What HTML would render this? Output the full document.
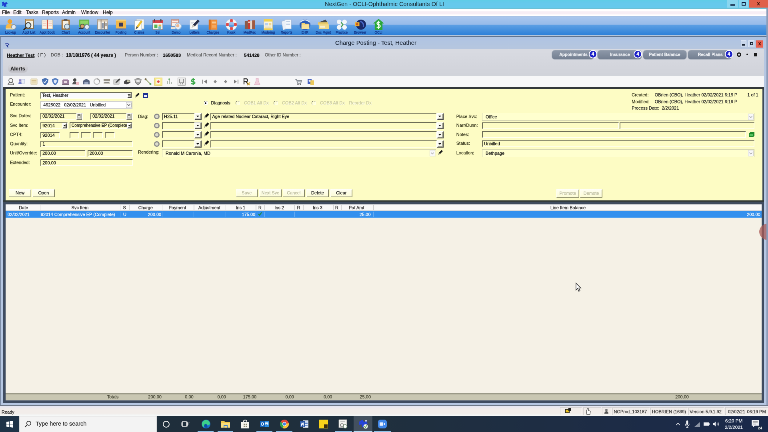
<!DOCTYPE html>
<html><head><meta charset="utf-8"><title>NextGen - Charge Posting</title>
<style>
html,body{margin:0;padding:0;width:768px;height:432px;overflow:hidden;background:#b6c7e2}
#stage{position:absolute;left:0;top:0;width:1920px;height:1080px;transform:scale(.4);transform-origin:0 0;will-change:transform;font-family:"Liberation Sans",sans-serif;overflow:hidden}
#stage div,#stage span.t,#stage svg{position:absolute;display:block}
#stage span.t{white-space:nowrap;-webkit-text-stroke:0.28px}
</style></head><body><div id="stage">
<div style="left:0px;top:0px;width:1920px;height:22px;background:linear-gradient(#60cde8,#66c9ec 8px,#66c9ec)"></div><div style="left:0px;top:19.5px;width:1920px;height:3px;background:#6bc0d6"></div><span class="t" style="top:2.3px;font-size:14.5px;line-height:17.4px;left:661px;width:600px;text-align:center;color:#1a2a33;-webkit-text-stroke:0">NextGen - OCLI-Ophthalmic Consultants Of LI</span><div style="left:1818px;top:0px;width:27px;height:19px;background:#8ad6ef"></div><div style="left:1847px;top:0px;width:24px;height:19px;background:#8ad6ef"></div><div style="left:1872px;top:0px;width:48px;height:19px;background:#e0604a"></div><div style="left:1826px;top:11px;width:11px;height:3px;background:#0a1a3a"></div><div style="left:1854px;top:5px;width:10px;height:9px;border:2px solid #0a1a3a;box-sizing:border-box"></div><span class="t" style="top:1.2px;font-size:13px;line-height:15.6px;left:1596px;width:600px;text-align:center;color:#30100a;font-weight:bold">x</span><svg style="left:2px;top:2px" width="19" height="18" viewBox="0 0 22 20"><path d="M3 4 L9 2 L11 6 L16 3 L20 8 L15 11 L17 16 L10 17 L8 13 L3 15 L5 9 Z" fill="#1f3fd0"/></svg><div style="left:0px;top:21.5px;width:1920px;height:19px;background:linear-gradient(#fff 0,#fff 5px,#f7eef5 7px,#f7eef5 13px,#fff 15px)"></div><span class="t" style="top:23.8px;font-size:12px;line-height:14.4px;left:5px;color:#222">File</span><span class="t" style="top:23.8px;font-size:12px;line-height:14.4px;left:33px;color:#222">Edit</span><span class="t" style="top:23.8px;font-size:12px;line-height:14.4px;left:65px;color:#222">Tasks</span><span class="t" style="top:23.8px;font-size:12px;line-height:14.4px;left:105px;color:#222">Reports</span><span class="t" style="top:23.8px;font-size:12px;line-height:14.4px;left:155px;color:#222">Admin</span><span class="t" style="top:23.8px;font-size:12px;line-height:14.4px;left:203px;color:#222">Window</span><span class="t" style="top:23.8px;font-size:12px;line-height:14.4px;left:257px;color:#222">Help</span><div style="left:0px;top:39.5px;width:1920px;height:2px;background:#a3b7d1"></div><div style="left:0px;top:41px;width:1920px;height:46px;background:linear-gradient(#abc8ee 0%,#98bbea 44%,#5d9fe4 47%,#2f82d9 100%)"></div><div style="left:0px;top:86.5px;width:1920px;height:2px;background:#cfe0f5"></div><div style="left:0px;top:88.5px;width:1920px;height:4.5px;background:#61748f"></div><svg style="left:10.75px;top:45.5px" width="31" height="31" viewBox="0 0 32 32"><circle cx="14" cy="8" r="6" fill="#f3a32c"/><path d="M3 27Q3 14 14 14Q25 14 25 27Z" fill="#f6b84a"/><circle cx="24" cy="22" r="6" fill="#dfeaf5" stroke="#8a94a0" stroke-width="2"/><path d="M4 27H22" stroke="#e8d9a8" stroke-width="3"/></svg><svg style="left:56.75px;top:45.5px" width="31" height="31" viewBox="0 0 32 32"><path d="M7 2H27V26H7Z" fill="#f6f2e6" stroke="#8c6a3a" stroke-width="2"/><path d="M7 2H27V7H7Z" fill="#c9a46a"/><circle cx="14" cy="18" r="7" fill="#cfe4ee" stroke="#3a3a3a" stroke-width="2.2"/><path d="M8 24L2 30" stroke="#222" stroke-width="3"/></svg><svg style="left:102.75px;top:45.5px" width="31" height="31" viewBox="0 0 32 32"><path d="M2 4H15V27H2Z" fill="#fbf6ea" stroke="#b9a98a" stroke-width="1.5"/><path d="M17 4H30V27H17Z" fill="#fbf6ea" stroke="#b9a98a" stroke-width="1.5"/><path d="M15 3H17V28H15Z" fill="#d84a3a"/><path d="M4 9H13M4 14H13M4 19H13M19 9H28M19 14H28M19 19H28" stroke="#e6a090" stroke-width="1.5"/></svg><svg style="left:148.75px;top:45.5px" width="31" height="31" viewBox="0 0 32 32"><path d="M5 3H26V29H5Z" fill="#a8702c"/><path d="M8 7H23V26H8Z" fill="#f4f0e4"/><path d="M11 1H20V6H11Z" fill="#5a5a5a"/><circle cx="19" cy="21" r="6.5" fill="#cfe4f0" stroke="#6a7a8a" stroke-width="2"/></svg><svg style="left:194.75px;top:45.5px" width="31" height="31" viewBox="0 0 32 32"><path d="M3 3H29V22H3Z" fill="#6ab84a"/><path d="M6 6H26V14H6Z" fill="#8fd468"/><circle cx="11" cy="20" r="5" fill="#d9a06a" stroke="#444" stroke-width="1.5"/><circle cx="23" cy="22" r="6" fill="#dfeaf5" stroke="#7a8a9a" stroke-width="2"/><path d="M2 26H14" stroke="#333" stroke-width="3"/></svg><svg style="left:240.75px;top:45.5px" width="31" height="31" viewBox="0 0 32 32"><path d="M3 3H29V28H3Z" fill="#f4f0e8" stroke="#9a8a78" stroke-width="1.5"/><path d="M3 3H29V8H3Z" fill="#d8c8b0"/><path d="M12 3V28M21 8V28" stroke="#8a7a6a" stroke-width="2"/><path d="M14 12H19V26H14Z" fill="#8a96a8"/><path d="M22 12H28V20H22Z" fill="#a8a8a8"/></svg><svg style="left:286.75px;top:45.5px" width="31" height="31" viewBox="0 0 32 32"><path d="M3 3H29V29H3Z" fill="#f2b84a"/><path d="M3 3H29V7H3Z" fill="#f7d070"/><path d="M11 11H21V21H11Z" fill="#3a3a5a"/><path d="M3 26H29V29H3Z" fill="#5a7ab8"/></svg><svg style="left:332.75px;top:45.5px" width="31" height="31" viewBox="0 0 32 32"><path d="M8 2H28V27H8Z" fill="#f8f8f4" stroke="#a8b0b8" stroke-width="1.2"/><path d="M4 6H22V30H4Z" fill="#fdfdfa" stroke="#a8b0b8" stroke-width="1.2"/><path d="M6 28L9 20L20 5L24 8L13 24Z" fill="#f0c030"/><path d="M6 28L9 20L13 24Z" fill="#555"/></svg><svg style="left:378.75px;top:45.5px" width="31" height="31" viewBox="0 0 32 32"><path d="M3 5H29V29H3Z" fill="#f6f6f2" stroke="#7a7a8a" stroke-width="1.5"/><path d="M3 5H29V12H3Z" fill="#d8434a"/><path d="M8 2V8M24 2V8" stroke="#444" stroke-width="2.5"/><path d="M7 16H15V25H7Z" fill="#58b85a"/><path d="M18 16H25V21H18Z" fill="#e8b040"/><circle cx="21" cy="24" r="4" fill="#7ac0c8"/></svg><svg style="left:424.75px;top:45.5px" width="31" height="31" viewBox="0 0 32 32"><path d="M4 3H22V20H4Z" fill="#f8f4ee" stroke="#c08a7a" stroke-width="1.5"/><path d="M6 6H20M6 10H20" stroke="#e09a8a" stroke-width="2"/><circle cx="21" cy="20" r="8" fill="#e8f0f8" stroke="#a8c0d8" stroke-width="2"/><circle cx="20" cy="19" r="4" fill="#f0b890"/><path d="M2 22H14V28H2Z" fill="#e8e0d8"/></svg><svg style="left:470.75px;top:45.5px" width="31" height="31" viewBox="0 0 32 32"><path d="M4 4H24V28H4Z" fill="#fbfbf8" stroke="#c8ccd4" stroke-width="1.2"/><path d="M8 24L12 16L24 3L29 7L17 20Z" fill="#2a3048"/><path d="M8 24L12 16L17 20Z" fill="#d8d0c0"/><path d="M7 10H16M7 14H12" stroke="#c8ccd4" stroke-width="1.5"/></svg><svg style="left:516.75px;top:45.5px" width="31" height="31" viewBox="0 0 32 32"><path d="M5 3H27V29H5Z" fill="#f0903a"/><path d="M5 3H10V29H5Z" fill="#d87020"/><path d="M13 8H24V13H13Z" fill="#f8c890"/><path d="M13 17H24V24H13Z" fill="#f4a860"/></svg><svg style="left:562.75px;top:45.5px" width="31" height="31" viewBox="0 0 32 32"><circle cx="16" cy="16" r="11" fill="none" stroke="#f4f4f4" stroke-width="7"/><path d="M16 2V9M16 23V30M2 16H9M23 16H30" stroke="#e04a4a" stroke-width="7"/><circle cx="16" cy="16" r="14.500" fill="none" stroke="#c8d0dc" stroke-width="1"/></svg><svg style="left:608.75px;top:45.5px" width="31" height="31" viewBox="0 0 32 32"><path d="M3 7H11V28H3Z" fill="#8a5a4a"/><path d="M11 4H17V28H11Z" fill="#c83a30"/><path d="M17 7H22V28H17Z" fill="#e8d8c8"/><path d="M22 5H29V28H22Z" fill="#a05a40"/><path d="M12 8H16V12H12Z" fill="#f0e0d0"/></svg><svg style="left:654.75px;top:45.5px" width="31" height="31" viewBox="0 0 32 32"><path d="M5 2H27V30H5Z" fill="#f8f4e4" stroke="#d8c890" stroke-width="1.2"/><path d="M5 2H27V8H5Z" fill="#f0d050"/><path d="M8 12H16V18H8Z" fill="#b8d0f0"/><path d="M18 12H24V18H18Z" fill="#f0d890"/><path d="M8 21H24V27H8Z" fill="#e8e0c0"/><path d="M5 26H27V30H5Z" fill="#f0d050"/></svg><svg style="left:700.75px;top:45.5px" width="31" height="31" viewBox="0 0 32 32"><path d="M3 8L14 4L18 26L7 30Z" fill="#eaf0f8" stroke="#a8b8d0" stroke-width="1"/><path d="M12 3H28V27H12Z" fill="#f4f8fc" stroke="#a8b8d0" stroke-width="1"/><path d="M15 8H25M15 12H25M15 16H25" stroke="#b8c8e0" stroke-width="1.5"/></svg><svg style="left:746.75px;top:45.5px" width="31" height="31" viewBox="0 0 32 32"><circle cx="16" cy="16" r="14" fill="#2a5ab8"/><path d="M4 10Q16 -2 28 10" fill="none" stroke="#d8e4f4" stroke-width="3"/><path d="M7 12H15L17 14H27V27H7Z" fill="#f4d070"/><path d="M7 16H27V27H7Z" fill="#f8e098"/></svg><svg style="left:792.75px;top:45.5px" width="31" height="31" viewBox="0 0 32 32"><path d="M4 10L22 3L26 10Z" fill="#4a4a4a"/><path d="M2 10H28V17H2Z" fill="#e8c868"/><path d="M4 15H30V27H4Z" fill="#f0d888"/><path d="M7 19H20V24H7Z" fill="#f8f0d0"/></svg><svg style="left:838.75px;top:45.5px" width="31" height="31" viewBox="0 0 32 32"><circle cx="9" cy="9" r="6" fill="#f4f6f8"/><circle cx="23" cy="9" r="6" fill="#f4f6f8"/><circle cx="9" cy="23" r="6" fill="#f4f6f8"/><circle cx="23" cy="23" r="6" fill="#f4f6f8"/><circle cx="16" cy="16" r="5" fill="#e8ecf0"/><path d="M14 10L19 16L14 22" stroke="#3a9a4a" stroke-width="2.5" fill="none"/></svg><svg style="left:884.75px;top:45.5px" width="31" height="31" viewBox="0 0 32 32"><circle cx="18" cy="16" r="13" fill="#1a2a68"/><path d="M2 10H14V20H2Z" fill="#f0b030"/><circle cx="8" cy="15" r="3" fill="#c85a20"/><path d="M16 8Q26 10 24 22" stroke="#4a6ac8" stroke-width="3" fill="none"/></svg><svg style="left:930.75px;top:45.5px" width="31" height="31" viewBox="0 0 32 32"><path d="M16 1L30 13H26V30H6V13H2Z" fill="#2aa83a"/><path d="M20 10Q12 8 12 13Q12 16 16 16Q21 17 20 21Q18 25 11 22M16 6V27" stroke="#f4fff4" stroke-width="2.6" fill="none"/></svg><span class="t" style="top:76.52px;font-size:8.3px;line-height:9.96px;left:-273.75px;width:600px;text-align:center;color:#0f2f80">Lookup</span><span class="t" style="top:76.52px;font-size:8.3px;line-height:9.96px;left:-227.75px;width:600px;text-align:center;color:#0f2f80">Appt List</span><span class="t" style="top:76.52px;font-size:8.3px;line-height:9.96px;left:-181.75px;width:600px;text-align:center;color:#0f2f80">Appt Book</span><span class="t" style="top:76.52px;font-size:8.3px;line-height:9.96px;left:-135.75px;width:600px;text-align:center;color:#0f2f80">Chart</span><span class="t" style="top:76.52px;font-size:8.3px;line-height:9.96px;left:-89.75px;width:600px;text-align:center;color:#0f2f80">Account</span><span class="t" style="top:76.52px;font-size:8.3px;line-height:9.96px;left:-43.75px;width:600px;text-align:center;color:#0f2f80">Encounter</span><span class="t" style="top:76.52px;font-size:8.3px;line-height:9.96px;left:2.25px;width:600px;text-align:center;color:#0f2f80">Posting</span><span class="t" style="top:76.52px;font-size:8.3px;line-height:9.96px;left:48.25px;width:600px;text-align:center;color:#0f2f80">Claims</span><span class="t" style="top:76.52px;font-size:8.3px;line-height:9.96px;left:94.25px;width:600px;text-align:center;color:#0f2f80">Sel</span><span class="t" style="top:76.52px;font-size:8.3px;line-height:9.96px;left:140.25px;width:600px;text-align:center;color:#0f2f80">Demo</span><span class="t" style="top:76.52px;font-size:8.3px;line-height:9.96px;left:186.25px;width:600px;text-align:center;color:#0f2f80">Letters</span><span class="t" style="top:76.52px;font-size:8.3px;line-height:9.96px;left:232.25px;width:600px;text-align:center;color:#0f2f80">Charges</span><span class="t" style="top:76.52px;font-size:8.3px;line-height:9.96px;left:278.25px;width:600px;text-align:center;color:#0f2f80">Kiosk</span><span class="t" style="top:76.52px;font-size:8.3px;line-height:9.96px;left:324.25px;width:600px;text-align:center;color:#0f2f80">MedRec</span><span class="t" style="top:76.52px;font-size:8.3px;line-height:9.96px;left:370.25px;width:600px;text-align:center;color:#0f2f80">Modeling</span><span class="t" style="top:76.52px;font-size:8.3px;line-height:9.96px;left:416.25px;width:600px;text-align:center;color:#0f2f80">Reports</span><span class="t" style="top:76.52px;font-size:8.3px;line-height:9.96px;left:462.25px;width:600px;text-align:center;color:#0f2f80">EHR</span><span class="t" style="top:76.52px;font-size:8.3px;line-height:9.96px;left:508.25px;width:600px;text-align:center;color:#0f2f80">Doc Mgmt</span><span class="t" style="top:76.52px;font-size:8.3px;line-height:9.96px;left:554.25px;width:600px;text-align:center;color:#0f2f80">Practice</span><span class="t" style="top:76.52px;font-size:8.3px;line-height:9.96px;left:600.25px;width:600px;text-align:center;color:#0f2f80">Browser</span><span class="t" style="top:76.52px;font-size:8.3px;line-height:9.96px;left:646.25px;width:600px;text-align:center;color:#0f2f80">OCLI</span><div style="left:0px;top:93px;width:1920px;height:925px;background:linear-gradient(#afc4e3,#b7c7df 30px,#b6c7e2 31px)"></div><span class="t" style="top:99.12px;font-size:14.8px;line-height:17.76px;left:639.5px;width:600px;text-align:center;color:#1a2433;-webkit-text-stroke:0.2px">Charge Posting - Test, Heather</span><svg style="left:11px;top:106px" width="16" height="14" viewBox="0 0 18 16"><path d="M2 3 L9 1 L14 6 L9 10 L12 14 L8 14 L6 10 Z" fill="#2a3f9a"/><path d="M4 4 L8 3 L10 6 L7 8Z" fill="#dfe8ff"/></svg><div style="left:1852px;top:101px;width:14px;height:17px;background:#c9d7ec;border:1px solid #e6eefa;box-sizing:border-box"></div><div style="left:1871px;top:101px;width:15px;height:17px;background:#c9d7ec;border:1px solid #e6eefa;box-sizing:border-box"></div><div style="left:1890px;top:101px;width:18px;height:18px;background:#e8604f"></div><div style="left:1855px;top:110px;width:8px;height:4px;background:#1a2433"></div><div style="left:1875px;top:105px;width:8px;height:8px;border:2px solid #1a2433;box-sizing:border-box"></div><span class="t" style="top:101.8px;font-size:12px;line-height:14.4px;left:1599px;width:600px;text-align:center;color:#40100a;font-weight:bold">x</span><div style="left:8px;top:122px;width:1902px;height:67px;background:linear-gradient(#d9dbe2,#d1d3da)"></div><span class="t" style="top:131.04px;font-size:11.6px;line-height:13.92px;left:17px;font-weight:bold;text-decoration:underline;color:#111">Heather Test</span><span class="t" style="top:131.4px;font-size:11px;line-height:13.2px;left:94px;color:#222">( F )</span><span class="t" style="top:131.4px;font-size:11px;line-height:13.2px;left:127px;color:#555">DOB :</span><span class="t" style="top:130.86px;font-size:11.9px;line-height:14.28px;left:165px;font-weight:bold;color:#111">10/18/1976 ( 44 years )</span><span class="t" style="top:131.4px;font-size:11px;line-height:13.2px;left:312px;color:#555">Person Number :</span><span class="t" style="top:131.04px;font-size:11.6px;line-height:13.92px;left:407px;font-weight:bold;color:#111">1650583</span><span class="t" style="top:131.4px;font-size:11px;line-height:13.2px;left:467px;color:#555">Medical Record Number :</span><span class="t" style="top:131.04px;font-size:11.6px;line-height:13.92px;left:610px;font-weight:bold;color:#111">541428</span><span class="t" style="top:131.4px;font-size:11px;line-height:13.2px;left:662px;color:#555">Other ID Number :</span><div style="left:1380px;top:125.75px;width:105px;height:21.75px;background:linear-gradient(#8e99a9,#737f91);border-radius:7px;box-shadow:0 0 0 1px #a9b1bd"></div><span class="t" style="top:130.45px;font-size:10.5px;line-height:12.6px;left:1133.5px;width:600px;text-align:center;color:#f0f2f6;font-weight:bold">Appointments</span><div style="left:1473.5px;top:126.5px;width:17px;height:17px;background:#1c22c8;border-radius:50%;box-shadow:0 0 0 2px #fff"></div><span class="t" style="top:127.8px;font-size:12px;line-height:14.4px;left:1182px;width:600px;text-align:center;color:#fff;font-weight:bold">4</span><div style="left:1494.25px;top:125.75px;width:109.5px;height:21.75px;background:linear-gradient(#8e99a9,#737f91);border-radius:7px;box-shadow:0 0 0 1px #a9b1bd"></div><span class="t" style="top:130.45px;font-size:10.5px;line-height:12.6px;left:1250px;width:600px;text-align:center;color:#f0f2f6;font-weight:bold">Insurance</span><div style="left:1586px;top:126.5px;width:17px;height:17px;background:#1c22c8;border-radius:50%;box-shadow:0 0 0 2px #fff"></div><span class="t" style="top:127.8px;font-size:12px;line-height:14.4px;left:1294.5px;width:600px;text-align:center;color:#fff;font-weight:bold">4</span><div style="left:1607.5px;top:125.75px;width:108.25px;height:21.75px;background:linear-gradient(#8e99a9,#737f91);border-radius:7px;box-shadow:0 0 0 1px #a9b1bd"></div><span class="t" style="top:130.45px;font-size:10.5px;line-height:12.6px;left:1361.62px;width:600px;text-align:center;color:#f0f2f6;font-weight:bold">Patient Balance</span><div style="left:1720px;top:125.75px;width:109.25px;height:21.75px;background:linear-gradient(#8e99a9,#737f91);border-radius:7px;box-shadow:0 0 0 1px #a9b1bd"></div><span class="t" style="top:130.45px;font-size:10.5px;line-height:12.6px;left:1475.62px;width:600px;text-align:center;color:#f0f2f6;font-weight:bold">Recall Plans</span><div style="left:1813.5px;top:126.5px;width:17px;height:17px;background:#1c22c8;border-radius:50%;box-shadow:0 0 0 2px #fff"></div><span class="t" style="top:127.8px;font-size:12px;line-height:14.4px;left:1522px;width:600px;text-align:center;color:#fff;font-weight:bold">4</span><div style="left:1842px;top:130.75px;width:11px;height:11px;border:3.5px solid #1a1a1a;border-radius:50%;box-sizing:border-box"></div><div style="left:1865.5px;top:134.25px;width:4px;height:4px;background:#1a1a1a;border-radius:50%"></div><div style="left:1884.75px;top:132.25px;width:8.5px;height:8.5px;background:#1a1a1a"></div><div style="left:21.25px;top:163.25px;width:46.75px;height:17.5px;background:linear-gradient(#d8d8dc,#bdbdc4);border-radius:8px;box-shadow:0 0 0 1px #c9c9cf"></div><span class="t" style="top:164.2px;font-size:13px;line-height:15.6px;left:-255.5px;width:600px;text-align:center;font-weight:bold;color:#222">Alerts</span><div style="left:8px;top:188px;width:1902px;height:30px;background:#f7f7f8;border-top:1px solid #c5c9d1;box-sizing:border-box"></div><svg style="left:16.75px;top:194px;opacity:.85" width="20" height="20" viewBox="0 0 20 20"><circle cx="10" cy="7" r="5" fill="#f4f4f4" stroke="#444" stroke-width="1.6"/><path d="M3 18Q3 12 10 12Q17 12 17 18Z" fill="#e8e8e8" stroke="#444" stroke-width="1.4"/></svg><svg style="left:43.75px;top:194px;opacity:.85" width="20" height="20" viewBox="0 0 20 20"><circle cx="6" cy="7" r="3" fill="#7a6ab8"/><path d="M2 16Q2 10 6 10Q10 10 10 16Z" fill="#5a6ac8"/><path d="M10 4H18V14H10Z" fill="#e8ecf8" stroke="#9aa8d0" stroke-width="1"/></svg><svg style="left:75.25px;top:194px;opacity:.85" width="20" height="20" viewBox="0 0 20 20"><path d="M2 3H18V17H2Z" fill="#ecdfb8" stroke="#c8b888" stroke-width="1"/><path d="M4 7H16M4 11H16" stroke="#c8b070" stroke-width="1.5"/></svg><svg style="left:102.75px;top:194px;opacity:.85" width="20" height="20" viewBox="0 0 20 20"><path d="M10 1L18 4Q18 15 10 19Q2 15 2 4Z" fill="#2a5aa8"/><path d="M6 10L9 13L14 6" stroke="#e8f0ff" stroke-width="2" fill="none"/></svg><svg style="left:128px;top:194px;opacity:.85" width="20" height="20" viewBox="0 0 20 20"><path d="M10 1L18 4Q18 15 10 19Q2 15 2 4Z" fill="#3a6ab8"/><path d="M10 5L14 7Q14 13 10 15Q6 13 6 7Z" fill="#dfe8f8"/></svg><svg style="left:154px;top:194px;opacity:.85" width="20" height="20" viewBox="0 0 20 20"><path d="M2 6H18V17H2Z" fill="#8a6a8a"/><path d="M4 3H16V6H4Z" fill="#b89ab8"/><path d="M6 9H14V14H6Z" fill="#e8d8e0"/><path d="M1 17H19V19H1Z" fill="#5a4a5a"/></svg><svg style="left:179px;top:194px;opacity:.85" width="20" height="20" viewBox="0 0 20 20"><circle cx="8" cy="6" r="4" fill="#2a2a2a"/><path d="M2 17Q2 10 8 10Q13 10 13 17Z" fill="#3a3a3a"/><path d="M11 11H19V18H11Z" fill="#e8b0b8"/></svg><svg style="left:206px;top:194px;opacity:.85" width="20" height="20" viewBox="0 0 20 20"><path d="M2 8Q10 0 18 8V17H2Z" fill="#3a4a6a"/><path d="M5 11H15V17H5Z" fill="#8a9ab8"/></svg><svg style="left:231.75px;top:194px;opacity:.85" width="20" height="20" viewBox="0 0 20 20"><circle cx="10" cy="10" r="7" fill="#fafafa" stroke="#b8b8b8" stroke-width="2.5"/><path d="M10 3A7 7 0 0 1 17 10" stroke="#888" stroke-width="2.5" fill="none"/></svg><svg style="left:257.25px;top:194px;opacity:.85" width="20" height="20" viewBox="0 0 20 20"><path d="M2 4H18V9H2Z" fill="#8a8478"/><path d="M2 10H18V16H2Z" fill="#c8c4b8"/><path d="M4 12H16V14H4Z" fill="#5a5a5a"/></svg><svg style="left:282.25px;top:194px;opacity:.85" width="20" height="20" viewBox="0 0 20 20"><path d="M2 5H16V17H2Z" fill="#d0d0d0" stroke="#9a9a9a" stroke-width="1"/><path d="M6 14L9 9L16 2L19 5L11 12Z" fill="#333"/></svg><svg style="left:308px;top:194px;opacity:.85" width="20" height="20" viewBox="0 0 20 20"><path d="M2 10L8 5L17 6L18 13L9 17L2 15Z" fill="#2a2a2a"/><path d="M9 7H16V11H9Z" fill="#c8c8a8"/></svg><svg style="left:335px;top:194px;opacity:.85" width="20" height="20" viewBox="0 0 20 20"><path d="M10 2L18 4Q18 14 10 18Q2 14 2 4Z" fill="#9a9a9a" stroke="#555" stroke-width="1.2"/><path d="M6 6H14V11H6Z" fill="#e8e8e8"/></svg><svg style="left:360px;top:194px;opacity:.85" width="20" height="20" viewBox="0 0 20 20"><path d="M3 3L17 17" stroke="#8a9a5a" stroke-width="2.2"/><circle cx="4" cy="4" r="2.500" fill="#6a5a3a"/><circle cx="16" cy="16" r="2.500" fill="#4a9a4a"/></svg><svg style="left:386.25px;top:194px;opacity:.85" width="20" height="20" viewBox="0 0 20 20"><path d="M0 0H20V20H0Z" fill="#f8e878" stroke="#d8b830" stroke-width="1.5"/><path d="M5 4H15V16H5Z" fill="#fdf8e0"/><circle cx="10" cy="10" r="3" fill="#e03030"/></svg><svg style="left:413.75px;top:194px;opacity:.85" width="20" height="20" viewBox="0 0 20 20"><path d="M4 16V9M9 16V4M14 16V11" stroke="#8a9a8a" stroke-width="2"/><circle cx="9" cy="4" r="2" fill="#4a9a4a"/></svg><svg style="left:443.5px;top:194px;opacity:.85" width="20" height="20" viewBox="0 0 20 20"><path d="M0.500 0.500H19.500V19.500H0.500Z" fill="#e8e8e8" stroke="#9a9a9a" stroke-width="1"/><path d="M5 4V13H15V4M8 13V17M12 13V17" stroke="#6a6a6a" stroke-width="1.6" fill="none"/></svg><svg style="left:472.75px;top:194px;opacity:.85" width="20" height="20" viewBox="0 0 20 20"><path d="M14 5Q6 3 6 8Q6 10 10 10Q15 11 14 14Q12 17 5 15M10 1V19" stroke="#1a9a2a" stroke-width="2.8" fill="none"/></svg><svg style="left:501.75px;top:194px;opacity:.85" width="20" height="20" viewBox="0 0 20 20"><path d="M5 5V15" stroke="#666" stroke-width="2"/><path d="M15 5L8 10L15 15Z" fill="#666"/></svg><svg style="left:528px;top:194px;opacity:.85" width="20" height="20" viewBox="0 0 20 20"><path d="M10 5.500L14 10L10 14.500L6 10Z" fill="#777"/></svg><svg style="left:553.5px;top:194px;opacity:.85" width="20" height="20" viewBox="0 0 20 20"><path d="M10 5.500L14 10L10 14.500L6 10Z" fill="#777"/></svg><svg style="left:579.75px;top:194px;opacity:.85" width="20" height="20" viewBox="0 0 20 20"><path d="M15 5V15" stroke="#666" stroke-width="2"/><path d="M5 5L12 10L5 15Z" fill="#666"/></svg><svg style="left:606.5px;top:194px;opacity:.85" width="20" height="20" viewBox="0 0 20 20"><path d="M3 17V3H8Q12 3 12 6.500Q12 10 8 10H3M8 10L14 18" stroke="#111" stroke-width="2.4" fill="none"/><path d="M11 12L18 19M18 12L11 19" stroke="#d8a820" stroke-width="2.2"/></svg><svg style="left:633px;top:194px;opacity:.85" width="20" height="20" viewBox="0 0 20 20"><path d="M7 2H13V8L17 18H3L7 8Z" fill="#f0c8d8" stroke="#d8a0b8" stroke-width="1"/></svg><svg style="left:735.5px;top:194px;opacity:.85" width="20" height="20" viewBox="0 0 20 20"><path d="M2 4H5L8 14H16L18 7H6" stroke="#7a8088" stroke-width="2" fill="none"/><circle cx="9" cy="17" r="1.800" fill="#555"/><circle cx="15" cy="17" r="1.800" fill="#555"/><path d="M8 8H16V12H8Z" fill="#a8b0b8"/></svg><svg style="left:767.25px;top:194px;opacity:.85" width="20" height="20" viewBox="0 0 20 20"><path d="M2 4H12V16H2Z" fill="#2a4ab8"/><path d="M9 7H18V18H9Z" fill="#e8c040"/><circle cx="7" cy="8" r="2.500" fill="#e8ecff"/></svg><div style="left:8px;top:218px;width:1902px;height:286px;background:#3f4b5b"></div><div style="left:8px;top:218px;width:1902px;height:6px;background:#33383a"></div><div style="left:14px;top:223px;width:1892px;height:277.5px;background:#fdfcc4"></div><span class="t" style="top:231.4px;font-size:11px;line-height:13.2px;left:25px;color:#33331a">Patient:</span><span class="t" style="top:254.15px;font-size:11px;line-height:13.2px;left:25px;color:#33331a">Encounter:</span><span class="t" style="top:283.4px;font-size:11px;line-height:13.2px;left:25px;color:#33331a">Svc Dates:</span><span class="t" style="top:307.15px;font-size:11px;line-height:13.2px;left:25px;color:#33331a">Svc Item:</span><span class="t" style="top:330.4px;font-size:11px;line-height:13.2px;left:25px;color:#33331a">CPT4:</span><span class="t" style="top:352.65px;font-size:11px;line-height:13.2px;left:25px;color:#33331a">Quantity:</span><span class="t" style="top:375.9px;font-size:11px;line-height:13.2px;left:25px;color:#33331a">Unit/Override:</span><span class="t" style="top:399.65px;font-size:11px;line-height:13.2px;left:25px;color:#33331a">Extended:</span><div style="left:101.25px;top:229.5px;width:229.5px;height:17px;box-sizing:border-box;border:2px solid;border-color:#6e6e58 #fffff0 #fffff0 #6e6e58;background:#fafafc;"></div><span class="t" style="top:231.9px;font-size:11px;line-height:13.2px;left:105.25px;color:#111">Test, Heather</span><div style="left:317.75px;top:231.5px;width:11px;height:13px;box-sizing:border-box;background:#f8f8ee;border:2px solid;border-color:#fff #4a4a4a #4a4a4a #fff;box-shadow:inset -1.5px -1.5px 0 #9a9a88"></div><svg style="left:319.25px;top:236px" width="7" height="4" viewBox="0 0 7 4"><path d="M0 0H7L3.5 4Z" fill="#111"/></svg><div style="left:101.25px;top:252.5px;width:229.5px;height:19px;box-sizing:border-box;border:1px solid #c3c3c3;background:#fff;"></div><span class="t" style="top:255.9px;font-size:11px;line-height:13.2px;left:108.25px;color:#111">4625022&nbsp;&nbsp;&nbsp;02/02/2021&nbsp;&nbsp;&nbsp;Unbilled</span><div style="left:314.75px;top:254.5px;width:14px;height:15px;box-sizing:border-box;background:#f8f8f8;border:1px solid #a8a8a8;border-radius:2px"></div><svg style="left:317.75px;top:260px" width="8" height="5" viewBox="0 0 8 5"><path d="M0.5 0.5L4 4L7.5 0.5" fill="none" stroke="#444" stroke-width="1.4"/></svg><div style="left:101.25px;top:281.75px;width:105.25px;height:16.75px;box-sizing:border-box;border:2px solid;border-color:#6e6e58 #fffff0 #fffff0 #6e6e58;"></div><span class="t" style="top:284.025px;font-size:11px;line-height:13.2px;left:106.25px;color:#111">02/02/2021</span><div style="left:226.25px;top:281.75px;width:105.75px;height:16.75px;box-sizing:border-box;border:2px solid;border-color:#6e6e58 #fffff0 #fffff0 #6e6e58;"></div><span class="t" style="top:284.025px;font-size:11px;line-height:13.2px;left:231.25px;color:#111">02/02/2021</span><div style="left:190.5px;top:283px;width:14px;height:15.75px;box-sizing:border-box;background:#d4d4c4;border:1.5px solid;border-color:#fff #555 #555 #fff"></div><div style="left:193.5px;top:286px;width:7px;height:8.75px;box-sizing:border-box;background:#ecece0;border:1px solid #666;border-top:3px solid #555"></div><div style="left:316px;top:283px;width:14px;height:15.75px;box-sizing:border-box;background:#d4d4c4;border:1.5px solid;border-color:#fff #555 #555 #fff"></div><div style="left:319px;top:286px;width:7px;height:8.75px;box-sizing:border-box;background:#ecece0;border:1px solid #666;border-top:3px solid #555"></div><div style="left:101.25px;top:305.75px;width:67.75px;height:16.75px;box-sizing:border-box;border:2px solid;border-color:#6e6e58 #fffff0 #fffff0 #6e6e58;"></div><span class="t" style="top:308.025px;font-size:11px;line-height:13.2px;left:106.25px;color:#111">92014</span><div style="left:156px;top:307.75px;width:11px;height:12.75px;box-sizing:border-box;background:#f8f8ee;border:2px solid;border-color:#fff #4a4a4a #4a4a4a #fff;box-shadow:inset -1.5px -1.5px 0 #9a9a88"></div><svg style="left:157.5px;top:312.125px" width="7" height="4" viewBox="0 0 7 4"><path d="M0 0H7L3.5 4Z" fill="#111"/></svg><div style="left:173.75px;top:305px;width:157.25px;height:17px;box-sizing:border-box;border:2px solid;border-color:#6e6e58 #fffff0 #fffff0 #6e6e58;"></div><span class="t" style="top:307.82px;font-size:10.3px;line-height:12.36px;left:178.75px;color:#111">Comprehensive EP (Complete</span><div style="left:318px;top:307.75px;width:11px;height:12.75px;box-sizing:border-box;background:#f8f8ee;border:2px solid;border-color:#fff #4a4a4a #4a4a4a #fff;box-shadow:inset -1.5px -1.5px 0 #9a9a88"></div><svg style="left:319.5px;top:312.125px" width="7" height="4" viewBox="0 0 7 4"><path d="M0 0H7L3.5 4Z" fill="#111"/></svg><div style="left:101.25px;top:329.5px;width:48.75px;height:16.75px;box-sizing:border-box;border:2px solid;border-color:#6e6e58 #fffff0 #fffff0 #6e6e58;"></div><span class="t" style="top:331.775px;font-size:11px;line-height:13.2px;left:106.25px;color:#111">92014</span><div style="left:173.75px;top:329.5px;width:24.25px;height:16.75px;box-sizing:border-box;border:2px solid;border-color:#6e6e58 #fffff0 #fffff0 #6e6e58;"></div><div style="left:202px;top:329.5px;width:25.5px;height:16.75px;box-sizing:border-box;border:2px solid;border-color:#6e6e58 #fffff0 #fffff0 #6e6e58;"></div><div style="left:232px;top:329.5px;width:25px;height:16.75px;box-sizing:border-box;border:2px solid;border-color:#6e6e58 #fffff0 #fffff0 #6e6e58;"></div><div style="left:261.5px;top:329.5px;width:25px;height:16.75px;box-sizing:border-box;border:2px solid;border-color:#6e6e58 #fffff0 #fffff0 #6e6e58;"></div><div style="left:101.25px;top:352px;width:230.25px;height:16.25px;box-sizing:border-box;border:2px solid;border-color:#6e6e58 #fffff0 #fffff0 #6e6e58;"></div><span class="t" style="top:354.025px;font-size:11px;line-height:13.2px;left:106.25px;color:#111">1</span><div style="left:101.25px;top:375px;width:112.75px;height:16.5px;box-sizing:border-box;border:2px solid;border-color:#6e6e58 #fffff0 #fffff0 #6e6e58;"></div><span class="t" style="top:377.15px;font-size:11px;line-height:13.2px;left:106.25px;color:#111">200.00</span><div style="left:219px;top:375px;width:112.5px;height:16.5px;box-sizing:border-box;border:2px solid;border-color:#6e6e58 #fffff0 #fffff0 #6e6e58;"></div><span class="t" style="top:377.15px;font-size:11px;line-height:13.2px;left:224px;color:#111">200.00</span><div style="left:101.25px;top:398.25px;width:230.25px;height:16.75px;box-sizing:border-box;border:2px solid;border-color:#6e6e58 #fffff0 #fffff0 #6e6e58;"></div><span class="t" style="top:400.525px;font-size:11px;line-height:13.2px;left:106.25px;color:#111">200.00</span><svg style="left:336.25px;top:231.25px" width="14" height="14" viewBox="0 0 14 14"><path d="M1 13L3 8L10 1L13 4L6 11Z" fill="#222"/><path d="M1 13L3 8L6 11Z" fill="#c9c9a0"/></svg><div style="left:358.25px;top:232.5px;width:12px;height:12px;background:#1c2f8f"></div><div style="left:360.25px;top:236.5px;width:8px;height:6px;background:#e8ecff"></div><div style="left:22.25px;top:473.25px;width:55.75px;height:19.25px;box-sizing:border-box;background:linear-gradient(#fffff2,#fdfdd6);border:1.5px solid;border-color:#fffffa #77775a #77775a #fffffa;box-shadow:inset -1px -1px 0 #b4b494"></div><span class="t" style="top:476.275px;font-size:11px;line-height:13.2px;left:-249.875px;width:600px;text-align:center;color:#111">New</span><div style="left:81px;top:473.25px;width:55.75px;height:19.25px;box-sizing:border-box;background:linear-gradient(#fffff2,#fdfdd6);border:1.5px solid;border-color:#fffffa #77775a #77775a #fffffa;box-shadow:inset -1px -1px 0 #b4b494"></div><span class="t" style="top:476.275px;font-size:11px;line-height:13.2px;left:-191.125px;width:600px;text-align:center;color:#111">Open</span><div style="left:589.5px;top:473.25px;width:54.75px;height:19.25px;box-sizing:border-box;background:linear-gradient(#fffff2,#fdfdd6);border:1.5px solid;border-color:#fffffa #77775a #77775a #fffffa;box-shadow:inset -1px -1px 0 #b4b494"></div><span class="t" style="top:476.275px;font-size:11px;line-height:13.2px;left:316.875px;width:600px;text-align:center;color:#b9b99a;text-shadow:1px 1px 0 #fffff0">Save</span><div style="left:648px;top:473.25px;width:55.5px;height:19.25px;box-sizing:border-box;background:linear-gradient(#fffff2,#fdfdd6);border:1.5px solid;border-color:#fffffa #77775a #77775a #fffffa;box-shadow:inset -1px -1px 0 #b4b494"></div><span class="t" style="top:476.275px;font-size:11px;line-height:13.2px;left:375.75px;width:600px;text-align:center;color:#b9b99a;text-shadow:1px 1px 0 #fffff0">Next Svc</span><div style="left:706.75px;top:473.25px;width:55px;height:19.25px;box-sizing:border-box;background:linear-gradient(#fffff2,#fdfdd6);border:1.5px solid;border-color:#fffffa #77775a #77775a #fffffa;box-shadow:inset -1px -1px 0 #b4b494"></div><span class="t" style="top:476.275px;font-size:11px;line-height:13.2px;left:434.25px;width:600px;text-align:center;color:#b9b99a;text-shadow:1px 1px 0 #fffff0">Cancel</span><div style="left:766px;top:473.25px;width:56px;height:19.25px;box-sizing:border-box;background:linear-gradient(#fffff2,#fdfdd6);border:1.5px solid;border-color:#fffffa #77775a #77775a #fffffa;box-shadow:inset -1px -1px 0 #b4b494"></div><span class="t" style="top:476.275px;font-size:11px;line-height:13.2px;left:494px;width:600px;text-align:center;color:#111">Delete</span><div style="left:825.5px;top:473.25px;width:55.75px;height:19.25px;box-sizing:border-box;background:linear-gradient(#fffff2,#fdfdd6);border:1.5px solid;border-color:#fffffa #77775a #77775a #fffffa;box-shadow:inset -1px -1px 0 #b4b494"></div><span class="t" style="top:476.275px;font-size:11px;line-height:13.2px;left:553.375px;width:600px;text-align:center;color:#111">Clear</span><div style="left:1391.25px;top:473.25px;width:56.25px;height:20.75px;box-sizing:border-box;background:linear-gradient(#fffff2,#fdfdd6);border:1.5px solid;border-color:#fffffa #77775a #77775a #fffffa;box-shadow:inset -1px -1px 0 #b4b494"></div><span class="t" style="top:477.025px;font-size:11px;line-height:13.2px;left:1119.38px;width:600px;text-align:center;color:#b9b99a;text-shadow:1px 1px 0 #fffff0">Promote</span><div style="left:1450px;top:473.25px;width:56.25px;height:20.75px;box-sizing:border-box;background:linear-gradient(#fffff2,#fdfdd6);border:1.5px solid;border-color:#fffffa #77775a #77775a #fffffa;box-shadow:inset -1px -1px 0 #b4b494"></div><span class="t" style="top:477.025px;font-size:11px;line-height:13.2px;left:1178.12px;width:600px;text-align:center;color:#b9b99a;text-shadow:1px 1px 0 #fffff0">Demote</span><span class="t" style="top:284.65px;font-size:11px;line-height:13.2px;left:345px;color:#33331a">Diag:</span><span class="t" style="top:374.15px;font-size:11px;line-height:13.2px;left:345px;color:#33331a">Rendering:</span><div style="left:385px;top:284.25px;width:14px;height:14px;box-sizing:border-box;border-radius:50%;border:3px solid #8c8c8c;background:#dcdccc"></div><div style="left:405px;top:282px;width:98.75px;height:18.5px;box-sizing:border-box;border:2px solid;border-color:#6e6e58 #fffff0 #fffff0 #6e6e58;"></div><span class="t" style="top:285.15px;font-size:11px;line-height:13.2px;left:410px;color:#111">H25.11</span><div style="left:486.25px;top:282.5px;width:17.5px;height:17.5px;box-sizing:border-box;background:#f8f8ee;border:2px solid;border-color:#fff #4a4a4a #4a4a4a #fff;box-shadow:inset -1.5px -1.5px 0 #9a9a88"></div><svg style="left:491px;top:289.25px" width="7" height="4" viewBox="0 0 7 4"><path d="M0 0H7L3.5 4Z" fill="#111"/></svg><svg style="left:509px;top:281.5px" width="15" height="15" viewBox="0 0 14 14"><path d="M1 13L3 7.500L9.500 1L13 4.500L6.500 11Z" fill="#111"/><path d="M1 13L3 7.500L6.500 11Z" fill="#b8b8a0"/></svg><div style="left:525.5px;top:282px;width:566px;height:18.5px;box-sizing:border-box;border:2px solid;border-color:#6e6e58 #fffff0 #fffff0 #6e6e58;"></div><span class="t" style="top:285.27px;font-size:10.8px;line-height:12.96px;left:530.5px;color:#111">Age-related Nuclear Cataract, Right Eye</span><div style="left:1091.5px;top:282.5px;width:17.5px;height:17.5px;box-sizing:border-box;background:#f8f8ee;border:2px solid;border-color:#fff #4a4a4a #4a4a4a #fff;box-shadow:inset -1.5px -1.5px 0 #9a9a88"></div><svg style="left:1096.25px;top:289.25px" width="7" height="4" viewBox="0 0 7 4"><path d="M0 0H7L3.5 4Z" fill="#111"/></svg><div style="left:385px;top:307.25px;width:14px;height:14px;box-sizing:border-box;border-radius:50%;border:3px solid #8c8c8c;background:#dcdccc"></div><div style="left:405px;top:305px;width:98.75px;height:18.5px;box-sizing:border-box;border:2px solid;border-color:#6e6e58 #fffff0 #fffff0 #6e6e58;"></div><div style="left:486.25px;top:305.5px;width:17.5px;height:17.5px;box-sizing:border-box;background:#f8f8ee;border:2px solid;border-color:#fff #4a4a4a #4a4a4a #fff;box-shadow:inset -1.5px -1.5px 0 #9a9a88"></div><svg style="left:491px;top:312.25px" width="7" height="4" viewBox="0 0 7 4"><path d="M0 0H7L3.5 4Z" fill="#111"/></svg><svg style="left:509px;top:304.5px" width="15" height="15" viewBox="0 0 14 14"><path d="M1 13L3 7.500L9.500 1L13 4.500L6.500 11Z" fill="#111"/><path d="M1 13L3 7.500L6.500 11Z" fill="#b8b8a0"/></svg><div style="left:525.5px;top:305px;width:566px;height:18.5px;box-sizing:border-box;border:2px solid;border-color:#6e6e58 #fffff0 #fffff0 #6e6e58;"></div><div style="left:1091.5px;top:305.5px;width:17.5px;height:17.5px;box-sizing:border-box;background:#f8f8ee;border:2px solid;border-color:#fff #4a4a4a #4a4a4a #fff;box-shadow:inset -1.5px -1.5px 0 #9a9a88"></div><svg style="left:1096.25px;top:312.25px" width="7" height="4" viewBox="0 0 7 4"><path d="M0 0H7L3.5 4Z" fill="#111"/></svg><div style="left:385px;top:330px;width:14px;height:14px;box-sizing:border-box;border-radius:50%;border:3px solid #8c8c8c;background:#dcdccc"></div><div style="left:405px;top:327.75px;width:98.75px;height:18.5px;box-sizing:border-box;border:2px solid;border-color:#6e6e58 #fffff0 #fffff0 #6e6e58;"></div><div style="left:486.25px;top:328.25px;width:17.5px;height:17.5px;box-sizing:border-box;background:#f8f8ee;border:2px solid;border-color:#fff #4a4a4a #4a4a4a #fff;box-shadow:inset -1.5px -1.5px 0 #9a9a88"></div><svg style="left:491px;top:335px" width="7" height="4" viewBox="0 0 7 4"><path d="M0 0H7L3.5 4Z" fill="#111"/></svg><svg style="left:509px;top:327.25px" width="15" height="15" viewBox="0 0 14 14"><path d="M1 13L3 7.500L9.500 1L13 4.500L6.500 11Z" fill="#111"/><path d="M1 13L3 7.500L6.500 11Z" fill="#b8b8a0"/></svg><div style="left:525.5px;top:327.75px;width:566px;height:18.5px;box-sizing:border-box;border:2px solid;border-color:#6e6e58 #fffff0 #fffff0 #6e6e58;"></div><div style="left:1091.5px;top:328.25px;width:17.5px;height:17.5px;box-sizing:border-box;background:#f8f8ee;border:2px solid;border-color:#fff #4a4a4a #4a4a4a #fff;box-shadow:inset -1.5px -1.5px 0 #9a9a88"></div><svg style="left:1096.25px;top:335px" width="7" height="4" viewBox="0 0 7 4"><path d="M0 0H7L3.5 4Z" fill="#111"/></svg><div style="left:385px;top:352.75px;width:14px;height:14px;box-sizing:border-box;border-radius:50%;border:3px solid #8c8c8c;background:#dcdccc"></div><div style="left:405px;top:350.5px;width:98.75px;height:18.5px;box-sizing:border-box;border:2px solid;border-color:#6e6e58 #fffff0 #fffff0 #6e6e58;"></div><div style="left:486.25px;top:351px;width:17.5px;height:17.5px;box-sizing:border-box;background:#f8f8ee;border:2px solid;border-color:#fff #4a4a4a #4a4a4a #fff;box-shadow:inset -1.5px -1.5px 0 #9a9a88"></div><svg style="left:491px;top:357.75px" width="7" height="4" viewBox="0 0 7 4"><path d="M0 0H7L3.5 4Z" fill="#111"/></svg><svg style="left:509px;top:350px" width="15" height="15" viewBox="0 0 14 14"><path d="M1 13L3 7.500L9.500 1L13 4.500L6.500 11Z" fill="#111"/><path d="M1 13L3 7.500L6.500 11Z" fill="#b8b8a0"/></svg><div style="left:525.5px;top:350.5px;width:566px;height:18.5px;box-sizing:border-box;border:2px solid;border-color:#6e6e58 #fffff0 #fffff0 #6e6e58;"></div><div style="left:1091.5px;top:351px;width:17.5px;height:17.5px;box-sizing:border-box;background:#f8f8ee;border:2px solid;border-color:#fff #4a4a4a #4a4a4a #fff;box-shadow:inset -1.5px -1.5px 0 #9a9a88"></div><svg style="left:1096.25px;top:357.75px" width="7" height="4" viewBox="0 0 7 4"><path d="M0 0H7L3.5 4Z" fill="#111"/></svg><div style="left:405px;top:373px;width:684.5px;height:19.5px;box-sizing:border-box;border:1px solid #c9c9a8;background:#ffffcf;"></div><span class="t" style="top:376.65px;font-size:11px;line-height:13.2px;left:414px;color:#111">Ronald M Caronia, MD</span><div style="left:1073.5px;top:375px;width:14px;height:15.5px;box-sizing:border-box;background:#f8f8f8;border:1px solid #cfcfcf;border-radius:2px"></div><svg style="left:1076.5px;top:380.75px" width="8" height="5" viewBox="0 0 8 5"><path d="M0.5 0.5L4 4L7.5 0.5" fill="none" stroke="#a0a0a0" stroke-width="1.4"/></svg><svg style="left:1093.75px;top:373.75px" width="14" height="14" viewBox="0 0 14 14"><path d="M1 13L3 8L10 1L13 4L6 11Z" fill="#1a1a1a"/><path d="M1 13L3 8L6 11Z" fill="#cfcfa8"/></svg><div style="left:508.5px;top:252px;width:11px;height:11px;box-sizing:border-box;border-radius:50%;border:1.5px solid;border-color:#6a6a55 #fff #fff #6a6a55;background:#fff"></div><div style="left:512px;top:255.5px;width:4px;height:4px;border-radius:50%;background:#000"></div><span class="t" style="top:251.4px;font-size:11px;line-height:13.2px;left:527.5px;color:#111">Diagnosis</span><div style="left:588.75px;top:252px;width:11px;height:11px;box-sizing:border-box;border-radius:50%;border:1.5px solid;border-color:#6a6a55 #fff #fff #6a6a55;background:#ffffd8"></div><span class="t" style="top:251.4px;font-size:11px;line-height:13.2px;left:610px;color:#c9c99c;text-shadow:1px 1px 0 #fffff2">COB1 Alt Dx</span><div style="left:684.25px;top:252px;width:11px;height:11px;box-sizing:border-box;border-radius:50%;border:1.5px solid;border-color:#6a6a55 #fff #fff #6a6a55;background:#ffffd8"></div><span class="t" style="top:251.4px;font-size:11px;line-height:13.2px;left:705px;color:#c9c99c;text-shadow:1px 1px 0 #fffff2">COB2 Alt Dx</span><div style="left:779.25px;top:252px;width:11px;height:11px;box-sizing:border-box;border-radius:50%;border:1.5px solid;border-color:#6a6a55 #fff #fff #6a6a55;background:#ffffd8"></div><span class="t" style="top:251.4px;font-size:11px;line-height:13.2px;left:800px;color:#c9c99c;text-shadow:1px 1px 0 #fffff2">COB3 Alt Dx</span><span class="t" style="top:251.4px;font-size:11px;line-height:13.2px;left:872.5px;color:#c9c99c;text-shadow:1px 1px 0 #fffff2">Reorder Dx</span><span class="t" style="top:284.65px;font-size:11px;line-height:13.2px;left:1140.75px;color:#33331a">Place Svc:</span><span class="t" style="top:307.15px;font-size:11px;line-height:13.2px;left:1140.75px;color:#33331a">Narr/Dunn:</span><span class="t" style="top:329.65px;font-size:11px;line-height:13.2px;left:1140.75px;color:#33331a">Notes:</span><span class="t" style="top:352.15px;font-size:11px;line-height:13.2px;left:1140.75px;color:#33331a">Status:</span><span class="t" style="top:375.9px;font-size:11px;line-height:13.2px;left:1140.75px;color:#33331a">Location:</span><div style="left:1205px;top:281.75px;width:680.75px;height:19.75px;box-sizing:border-box;border:1px solid #c9c9a8;background:#ffffcf;"></div><span class="t" style="top:285.525px;font-size:11px;line-height:13.2px;left:1214px;color:#111">Office</span><div style="left:1869.75px;top:283.75px;width:14px;height:15.75px;box-sizing:border-box;background:#f8f8f8;border:1px solid #cfcfcf;border-radius:2px"></div><svg style="left:1872.75px;top:289.625px" width="8" height="5" viewBox="0 0 8 5"><path d="M0.5 0.5L4 4L7.5 0.5" fill="none" stroke="#a0a0a0" stroke-width="1.4"/></svg><div style="left:1205px;top:305.5px;width:341.5px;height:17px;box-sizing:border-box;border:2px solid;border-color:#6e6e58 #fffff0 #fffff0 #6e6e58;"></div><div style="left:1549px;top:305.5px;width:336.75px;height:17px;box-sizing:border-box;border:2px solid;border-color:#6e6e58 #fffff0 #fffff0 #6e6e58;"></div><div style="left:1205px;top:328px;width:660px;height:17px;box-sizing:border-box;border:2px solid;border-color:#6e6e58 #fffff0 #fffff0 #6e6e58;"></div><div style="left:1205px;top:350.75px;width:680.75px;height:16.75px;box-sizing:border-box;border:2px solid;border-color:#6e6e58 #fffff0 #fffff0 #6e6e58;"></div><span class="t" style="top:353.025px;font-size:11px;line-height:13.2px;left:1210px;color:#111">Unbilled</span><div style="left:1205px;top:373.25px;width:680.75px;height:19.75px;box-sizing:border-box;border:1px solid #c9c9a8;background:#ffffcf;"></div><span class="t" style="top:377.025px;font-size:11px;line-height:13.2px;left:1214px;color:#111">Bethpage</span><div style="left:1869.75px;top:375.25px;width:14px;height:15.75px;box-sizing:border-box;background:#f8f8f8;border:1px solid #cfcfcf;border-radius:2px"></div><svg style="left:1872.75px;top:381.125px" width="8" height="5" viewBox="0 0 8 5"><path d="M0.5 0.5L4 4L7.5 0.5" fill="none" stroke="#a0a0a0" stroke-width="1.4"/></svg><svg style="left:1871.25px;top:328.75px" width="16" height="15" viewBox="0 0 16 15"><path d="M1 5L5 1H15V11L11 14H1Z" fill="#1f8a2a"/><path d="M3 6H12V11H3Z" fill="#58c060"/></svg><span class="t" style="top:231.4px;font-size:11px;line-height:13.2px;left:1579.25px;color:#33331a">Created:</span><span class="t" style="top:231.4px;font-size:11px;line-height:13.2px;left:1636.75px;color:#222">OBrien (CBO), Heather 02/02/2021 6:19 P</span><span class="t" style="top:247.9px;font-size:11px;line-height:13.2px;left:1579.25px;color:#33331a">Modified:</span><span class="t" style="top:247.9px;font-size:11px;line-height:13.2px;left:1636.75px;color:#222">OBrien (CBO), Heather 02/02/2021 6:19 P</span><span class="t" style="top:264.15px;font-size:11px;line-height:13.2px;left:1579.25px;color:#222">Process Date:&nbsp; 2/2/2021</span><span class="t" style="top:231.4px;font-size:11px;line-height:13.2px;right:24.25px;text-align:right;color:#222">1 of 1</span><div style="left:8px;top:500.5px;width:1902px;height:11px;background:linear-gradient(#2e3634,#46525f)"></div><div style="left:8px;top:505px;width:1902px;height:503px;background:#3f4c60"></div><div style="left:14px;top:511px;width:1890px;height:490px;background:#f5f1e6"></div><div style="left:14px;top:511px;width:1890px;height:16px;background:#f9f9f9;border-bottom:1px solid #d0d0d0;box-sizing:border-box"></div><div style="left:14px;top:527.5px;width:1890px;height:16px;background:#3390ee"></div><div style="left:14px;top:543.5px;width:1890px;height:1px;background:#a9d0f5"></div><div style="left:99.5px;top:512px;width:1.5px;height:13px;background:#cfcfcf"></div><div style="left:99.5px;top:529px;width:1px;height:13px;background:#6fb0f4"></div><div style="left:299.5px;top:512px;width:1.5px;height:13px;background:#cfcfcf"></div><div style="left:299.5px;top:529px;width:1px;height:13px;background:#6fb0f4"></div><div style="left:322.25px;top:512px;width:1.5px;height:13px;background:#cfcfcf"></div><div style="left:322.25px;top:529px;width:1px;height:13px;background:#6fb0f4"></div><div style="left:404.5px;top:512px;width:1.5px;height:13px;background:#cfcfcf"></div><div style="left:404.5px;top:529px;width:1px;height:13px;background:#6fb0f4"></div><div style="left:484px;top:512px;width:1.5px;height:13px;background:#cfcfcf"></div><div style="left:484px;top:529px;width:1px;height:13px;background:#6fb0f4"></div><div style="left:563.75px;top:512px;width:1.5px;height:13px;background:#cfcfcf"></div><div style="left:563.75px;top:529px;width:1px;height:13px;background:#6fb0f4"></div><div style="left:639.25px;top:512px;width:1.5px;height:13px;background:#cfcfcf"></div><div style="left:639.25px;top:529px;width:1px;height:13px;background:#6fb0f4"></div><div style="left:660.75px;top:512px;width:1.5px;height:13px;background:#cfcfcf"></div><div style="left:660.75px;top:529px;width:1px;height:13px;background:#6fb0f4"></div><div style="left:735.75px;top:512px;width:1.5px;height:13px;background:#cfcfcf"></div><div style="left:735.75px;top:529px;width:1px;height:13px;background:#6fb0f4"></div><div style="left:757px;top:512px;width:1.5px;height:13px;background:#cfcfcf"></div><div style="left:757px;top:529px;width:1px;height:13px;background:#6fb0f4"></div><div style="left:832px;top:512px;width:1.5px;height:13px;background:#cfcfcf"></div><div style="left:832px;top:529px;width:1px;height:13px;background:#6fb0f4"></div><div style="left:852px;top:512px;width:1.5px;height:13px;background:#cfcfcf"></div><div style="left:852px;top:529px;width:1px;height:13px;background:#6fb0f4"></div><div style="left:933px;top:512px;width:1.5px;height:13px;background:#cfcfcf"></div><div style="left:933px;top:529px;width:1px;height:13px;background:#6fb0f4"></div><span class="t" style="top:513.15px;font-size:11px;line-height:13.2px;left:-241.25px;width:600px;text-align:center;color:#222">Date</span><span class="t" style="top:513.15px;font-size:11px;line-height:13.2px;left:-100px;width:600px;text-align:center;color:#222">Svc Item</span><span class="t" style="top:513.15px;font-size:11px;line-height:13.2px;left:11.25px;width:600px;text-align:center;color:#222">S</span><span class="t" style="top:513.15px;font-size:11px;line-height:13.2px;left:63.75px;width:600px;text-align:center;color:#222">Charge</span><span class="t" style="top:513.15px;font-size:11px;line-height:13.2px;left:143.5px;width:600px;text-align:center;color:#222">Payment</span><span class="t" style="top:513.15px;font-size:11px;line-height:13.2px;left:223.25px;width:600px;text-align:center;color:#222">Adjustment</span><span class="t" style="top:513.15px;font-size:11px;line-height:13.2px;left:301.5px;width:600px;text-align:center;color:#222">Ins 1</span><span class="t" style="top:513.15px;font-size:11px;line-height:13.2px;left:350px;width:600px;text-align:center;color:#222">R</span><span class="t" style="top:513.15px;font-size:11px;line-height:13.2px;left:398.25px;width:600px;text-align:center;color:#222">Ins 2</span><span class="t" style="top:513.15px;font-size:11px;line-height:13.2px;left:446.5px;width:600px;text-align:center;color:#222">R</span><span class="t" style="top:513.15px;font-size:11px;line-height:13.2px;left:494px;width:600px;text-align:center;color:#222">Ins 3</span><span class="t" style="top:513.15px;font-size:11px;line-height:13.2px;left:542px;width:600px;text-align:center;color:#222">R</span><span class="t" style="top:513.15px;font-size:11px;line-height:13.2px;left:591.25px;width:600px;text-align:center;color:#222">Pat Amt</span><span class="t" style="top:513.15px;font-size:11px;line-height:13.2px;left:1120px;width:600px;text-align:center;color:#222">Line Item Balance</span><span class="t" style="top:529.65px;font-size:11px;line-height:13.2px;left:18.75px;color:#fff">02/02/2021</span><span class="t" style="top:529.65px;font-size:11px;line-height:13.2px;left:102px;color:#fff">92014 Comprehensive EP (Complete)</span><span class="t" style="top:529.65px;font-size:11px;line-height:13.2px;left:308px;color:#fff">U</span><span class="t" style="top:529.65px;font-size:11px;line-height:13.2px;right:1516.75px;text-align:right;color:#fff">200.00</span><span class="t" style="top:529.65px;font-size:11px;line-height:13.2px;right:1281.75px;text-align:right;color:#fff">175.00</span><span class="t" style="top:529.65px;font-size:11px;line-height:13.2px;right:993.5px;text-align:right;color:#fff">25.00</span><span class="t" style="top:529.65px;font-size:11px;line-height:13.2px;right:19.25px;text-align:right;color:#fff">200.00</span><svg style="left:645px;top:529.5px" width="10" height="10" viewBox="0 0 10 10"><path d="M1 5L4 8L9 1" fill="none" stroke="#1f8a3a" stroke-width="2.2"/></svg><div style="left:14px;top:982px;width:1890px;height:4px;background:#9b9a88"></div><div style="left:14px;top:985.5px;width:1890px;height:14px;background:#c9c7b2"></div><span class="t" style="top:985.65px;font-size:11px;line-height:13.2px;right:1623.5px;text-align:right;color:#444433">Totals</span><span class="t" style="top:985.65px;font-size:11px;line-height:13.2px;right:1516px;text-align:right;color:#444433">200.00</span><span class="t" style="top:985.65px;font-size:11px;line-height:13.2px;right:1436.25px;text-align:right;color:#444433">0.00</span><span class="t" style="top:985.65px;font-size:11px;line-height:13.2px;right:1355px;text-align:right;color:#444433">0.00</span><span class="t" style="top:985.65px;font-size:11px;line-height:13.2px;right:1278.75px;text-align:right;color:#444433">175.00</span><span class="t" style="top:985.65px;font-size:11px;line-height:13.2px;right:1185px;text-align:right;color:#444433">0.00</span><span class="t" style="top:985.65px;font-size:11px;line-height:13.2px;right:1089.5px;text-align:right;color:#444433">0.00</span><span class="t" style="top:985.65px;font-size:11px;line-height:13.2px;right:993px;text-align:right;color:#444433">25.00</span><span class="t" style="top:985.65px;font-size:11px;line-height:13.2px;right:198px;text-align:right;color:#444433">200.00</span><div style="left:1898px;top:559px;width:44px;height:41px;background:rgba(170,90,85,.75);border-radius:50%"></div><div style="left:1916px;top:20px;width:4px;height:1020px;background:#8c9cb8"></div><div style="left:0px;top:92px;width:2.5px;height:922px;background:#7d8da6"></div><div style="left:1912px;top:122px;width:1px;height:886px;background:#93a3bb"></div><div style="left:0px;top:1013px;width:1920px;height:2px;background:#707a88"></div><div style="left:0px;top:1015px;width:1920px;height:25px;background:linear-gradient(#e6e8f5 0,#f2edea 28%,#f2edea 72%,#f6fafa 100%)"></div><span class="t" style="top:1023.9px;font-size:11px;line-height:13.2px;left:4px;color:#111">Ready</span><div style="left:1400px;top:1017.5px;width:55px;height:20.75px;box-sizing:border-box;border:1px solid;border-color:#d2d0d0 #fff #fff #d2d0d0"></div><div style="left:1457.5px;top:1017.5px;width:45px;height:20.75px;box-sizing:border-box;border:1px solid;border-color:#d2d0d0 #fff #fff #d2d0d0"></div><div style="left:1505px;top:1017.5px;width:25px;height:20.75px;box-sizing:border-box;border:1px solid;border-color:#d2d0d0 #fff #fff #d2d0d0"></div><div style="left:1531.25px;top:1017.5px;width:93.75px;height:20.75px;box-sizing:border-box;border:1px solid;border-color:#d2d0d0 #fff #fff #d2d0d0"></div><div style="left:1626.25px;top:1017.5px;width:93.75px;height:20.75px;box-sizing:border-box;border:1px solid;border-color:#d2d0d0 #fff #fff #d2d0d0"></div><div style="left:1721.25px;top:1017.5px;width:88.75px;height:20.75px;box-sizing:border-box;border:1px solid;border-color:#d2d0d0 #fff #fff #d2d0d0"></div><div style="left:1812.5px;top:1017.5px;width:107.5px;height:20.75px;box-sizing:border-box;border:1px solid;border-color:#d2d0d0 #fff #fff #d2d0d0"></div><span class="t" style="top:1023.4px;font-size:11px;line-height:13.2px;left:1534.5px;color:#333">NGProd_103187</span><span class="t" style="top:1023.4px;font-size:11px;line-height:13.2px;left:1630px;color:#333">HOBRIEN (1639)</span><span class="t" style="top:1023.4px;font-size:11px;line-height:13.2px;left:1724.25px;color:#333">Version 5.9.1.92</span><span class="t" style="top:1023.4px;font-size:11px;line-height:13.2px;left:1820px;color:#333">02/02/21</span><span class="t" style="top:1023.4px;font-size:11px;line-height:13.2px;left:1867.5px;color:#333">06:19 PM</span><div style="left:1412.5px;top:1022.5px;width:11px;height:9px;background:#e8c020;border:1px solid #222;box-sizing:border-box"></div><div style="left:1420.5px;top:1019.5px;width:7px;height:8px;background:#222"></div><svg style="left:1463.75px;top:1019px" width="14" height="18" viewBox="0 0 14 18"><path d="M3 17L2 8L5 2L8 3L7 7L12 9L11 17Z" fill="#fdfdfd" stroke="#555" stroke-width="1.3"/></svg><svg style="left:1509.5px;top:1021.25px" width="12" height="14" viewBox="0 0 12 14"><circle cx="6" cy="4" r="3" fill="#777"/><path d="M1 13Q1 7 6 7Q11 7 11 13Z" fill="#555"/></svg><div style="left:0px;top:1039.5px;width:1920px;height:41px;background:linear-gradient(90deg,#1e2d39 0%,#20303e 50%,#1e2d45 75%,#1a294b 100%)"></div><div style="left:0px;top:1039.5px;width:48px;height:41px;background:#1f3347"></div><svg style="left:16px;top:1051.5px" width="17" height="17" viewBox="0 0 17 17"><path d="M0 2.4L7 1.4V8H0ZM8 1.2L17 0V8H8ZM0 9H7V15.6L0 14.6ZM8 9H17V17L8 15.8Z" fill="#fff"/></svg><div style="left:48px;top:1039.5px;width:344px;height:41px;background:#f3f3f3;border:1px solid #d8d8d8;box-sizing:border-box"></div><svg style="left:61px;top:1050.5px" width="18" height="18" viewBox="0 0 18 18"><circle cx="11" cy="7" r="5.2" fill="none" stroke="#333" stroke-width="1.7"/><path d="M7 11L1.5 16.5" stroke="#333" stroke-width="2"/></svg><span class="t" style="top:1051.36px;font-size:14.4px;line-height:17.28px;left:89px;color:#2a2a2a;-webkit-text-stroke:0.2px">Type here to search</span><div style="left:406.5px;top:1051.5px;width:17px;height:17px;box-sizing:border-box;border:2.2px solid #f2f2f2;border-radius:50%"></div><svg style="left:452.25px;top:1051.5px" width="22" height="16" viewBox="0 0 22 16"><path d="M4 2H14V14H4Z" fill="none" stroke="#eee" stroke-width="1.6"/><path d="M1 4V12M17 2V14M20.5 4V6" stroke="#eee" stroke-width="1.6"/><rect x="15" y="6" width="4" height="5" fill="#ddd"/></svg><div style="left:883.5px;top:1039.5px;width:47px;height:41px;background:#43505e"></div><svg style="left:503px;top:1048px" width="24" height="24" viewBox="0 0 24 24"><circle cx="12" cy="12" r="11" fill="#1b74d0"/><path d="M2 14A10 10 0 0 1 22 10Q22 15 15 15Q14 11 10 12Q6 14 8 20Q3 19 2 14Z" fill="#3ccf8a"/><path d="M8 20Q6 14 10 12Q13 11 14 14Q13 19 19 19A11 11 0 0 1 8 20Z" fill="#0d4fa0"/></svg><svg style="left:551.5px;top:1050px" width="24" height="20" viewBox="0 0 24 20"><path d="M1 3H9L11 5H23V19H1Z" fill="#f2c84a"/><path d="M1 8H23V19H1Z" fill="#f7dc7c"/><path d="M7 13H17V19H7Z" fill="#3a7fd0"/><path d="M9 15H15V19H9Z" fill="#f7dc7c"/></svg><svg style="left:602px;top:1048px" width="22" height="24" viewBox="0 0 22 24"><path d="M7 7V4Q11 0 15 4V7" fill="none" stroke="#f4f4ee" stroke-width="1.8"/><path d="M1 7H21V23H1Z" fill="#f4f4ee"/><path d="M7 11H10V14H7ZM12 11H15V14H12ZM7 16H10V19H7ZM12 16H15V19H12Z" fill="#8a8a70"/></svg><svg style="left:649px;top:1050px" width="24" height="20" viewBox="0 0 24 20"><path d="M8 3H23V17H8Z" fill="#2a8be0"/><path d="M12 6H22V13L17 10L12 13Z" fill="#e6f0fb"/><path d="M1 2H13V18H1Z" fill="#0f5fb8"/><circle cx="7" cy="10" r="3.2" fill="none" stroke="#fff" stroke-width="1.8"/></svg><svg style="left:699.25px;top:1048px" width="24" height="24" viewBox="0 0 24 24"><circle cx="12" cy="12" r="11" fill="#e04a3a"/><path d="M12 12L2.5 6.5A11 11 0 0 0 8 22.3Z" fill="#2fa350"/><path d="M12 12L8 22.3A11 11 0 0 0 22.8 10Z" fill="#f6c63a"/><circle cx="12" cy="12" r="5" fill="#fff"/><circle cx="12" cy="12" r="3.8" fill="#3f82e8"/></svg><svg style="left:748.5px;top:1050px" width="24" height="20" viewBox="0 0 24 20"><path d="M8 1H22V19H8Z" fill="#e8effa"/><path d="M11 5H20M11 9H20M11 13H20" stroke="#2b5fb4" stroke-width="1.5"/><path d="M1 3H13V17H1Z" fill="#2a57a6"/><path d="M3.5 6L5 14L7 8L9 14L10.5 6" fill="none" stroke="#fff" stroke-width="1.5"/></svg><svg style="left:796.5px;top:1048px" width="24" height="24" viewBox="0 0 24 24"><path d="M1 1H23V23H1Z" fill="#f8d21a"/><path d="M13 13H22V22H13Z" fill="#3a2c10"/></svg><svg style="left:845px;top:1048px" width="26" height="24" viewBox="0 0 26 24"><path d="M2 1H22V21H2Z" fill="#f2f2ee" stroke="#9a9a9a" stroke-width="1"/><circle cx="10" cy="15" r="4" fill="none" stroke="#777" stroke-width="1.6"/><circle cx="18" cy="18" r="4.5" fill="#fff" stroke="#6a8a6a" stroke-width="1.6"/><path d="M6 5H18" stroke="#bbb" stroke-width="2"/></svg><svg style="left:894.75px;top:1047px" width="26" height="26" viewBox="0 0 26 26"><path d="M3 7L11 2L15 8L21 5L24 12L17 14L18 21L10 20L9 14L3 15Z" fill="#2545d8"/><circle cx="19" cy="19" r="5.5" fill="#f4f4f4"/><path d="M16 19L18.5 21.5L22 16.5" stroke="#4a9a30" stroke-width="1.8" fill="none"/><circle cx="20" cy="5" r="2" fill="#e8ecff"/></svg><svg style="left:944.25px;top:1048px" width="24" height="24" viewBox="0 0 24 24"><rect x="1" y="1" width="22" height="22" rx="6" fill="#3f86e8"/><path d="M5 8H14V16H5ZM15 11L19 8V16L15 13Z" fill="#e8f0ff"/></svg><div style="left:493.5px;top:1077px;width:40.75px;height:3px;background:#8fc4ea"></div><div style="left:544.25px;top:1077px;width:39px;height:3px;background:#8fc4ea"></div><div style="left:641.25px;top:1077px;width:40px;height:3px;background:#8fc4ea"></div><div style="left:690px;top:1077px;width:41.25px;height:3px;background:#8fc4ea"></div><div style="left:837.5px;top:1077px;width:42.5px;height:3px;background:#8fc4ea"></div><div style="left:883.5px;top:1077px;width:47px;height:3px;background:#b5dcf5"></div><div style="left:935px;top:1077px;width:42.5px;height:3px;background:#8fc4ea"></div><svg style="left:1689px;top:1056px" width="12" height="8" viewBox="0 0 12 8"><path d="M1 7L6 2L11 7" fill="none" stroke="#eef0f4" stroke-width="1.6"/></svg><svg style="left:1712.25px;top:1050px" width="12" height="20" viewBox="0 0 12 20"><rect x="3.5" y="1" width="5" height="11" rx="2.5" fill="#eef0f4"/><path d="M1 9Q1 15 6 15Q11 15 11 9M6 15V19M3 19H9" fill="none" stroke="#eef0f4" stroke-width="1.4"/></svg><svg style="left:1735px;top:1054px" width="16" height="14" viewBox="0 0 16 14"><path d="M1 13L15 1V13Z" fill="#8a93a3"/></svg><svg style="left:1757.5px;top:1054px" width="18" height="12" viewBox="0 0 18 12"><rect x="1" y="2" width="14" height="8" fill="#eef0f4"/><rect x="15" y="4.500" width="2" height="3" fill="#eef0f4"/></svg><svg style="left:1781px;top:1053px" width="18" height="14" viewBox="0 0 18 14"><path d="M1 5H4L8 1V13L4 9H1Z" fill="#eef0f4"/><path d="M11 4Q13 7 11 10M13.500 2Q17 7 13.500 12" fill="none" stroke="#eef0f4" stroke-width="1.3"/></svg><span class="t" style="top:1044.54px;font-size:11.6px;line-height:13.92px;left:1534.5px;width:600px;text-align:center;color:#f4f6fa">6:20 PM</span><span class="t" style="top:1061.29px;font-size:11.6px;line-height:13.92px;left:1534.5px;width:600px;text-align:center;color:#f4f6fa">2/2/2021</span><svg style="left:1877.75px;top:1049px" width="22" height="20" viewBox="0 0 22 20"><path d="M1 1H19V15H9L5 19V15H1Z" fill="#eef0f4"/><path d="M4 5H16M4 8H16M4 11H12" stroke="#555" stroke-width="1.2"/></svg><div style="left:1892.5px;top:1063.75px;width:15px;height:13px;background:#1b2a44;border-radius:6px"></div><span class="t" style="top:1064.3px;font-size:9.5px;line-height:11.4px;left:1600px;width:600px;text-align:center;color:#fff">24</span><svg style="left:1437px;top:706px" width="18" height="25" viewBox="-2 -1 18 25"><path d="M1 1 L1 18 L5 14 L8 21 L11 20 L8 13 L13 13 Z" fill="#fff" stroke="#333" stroke-width="1.6"/></svg>
</div></body></html>
